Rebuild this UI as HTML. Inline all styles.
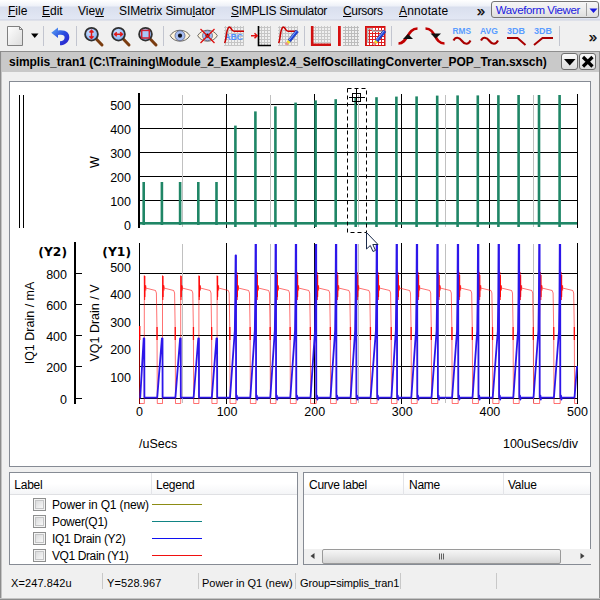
<!DOCTYPE html>
<html><head><meta charset="utf-8"><title>Waveform Viewer</title>
<style>
html,body{margin:0;padding:0;}
body{width:600px;height:600px;overflow:hidden;background:#f0f0f0;font-family:"Liberation Sans",sans-serif;font-size:12px;color:#000;position:relative;}
div{box-sizing:border-box;}
.abs,.pt,.mi,.st,.hd,.lg{position:absolute;white-space:nowrap;}
#menubar{position:absolute;left:0;top:0;width:600px;height:21px;background:linear-gradient(#ffffff 0px,#eef1f8 6px,#d9dfee 7px,#e2e7f4 19px,#c9cedc 20px,#f4f4f6 21px);}
.mi{top:3px;height:16px;line-height:16px;font-size:12px;color:#000;}
.mi u{text-decoration:underline;text-underline-offset:1px;}
#toolbar{position:absolute;left:0;top:21px;width:600px;height:30px;background:#f0f0f0;}
#tabbar{position:absolute;left:0;top:51px;width:600px;height:21px;background:#c9c9c9;border-top:1px solid #8e8e8e;border-left:2px solid #8c8c8c;border-right:1px solid #8e8e8e;}
#title{position:absolute;left:7px;top:3px;letter-spacing:-0.035px;font-weight:bold;font-size:12px;line-height:14px;white-space:nowrap;color:#000;}
.tbtn{position:absolute;top:1px;width:17px;height:17px;border:1px solid #6e6e6e;border-radius:3px;background:linear-gradient(#fafafa,#dcdcdc);}
#plot{position:absolute;left:9px;top:81px;width:582px;height:386px;background:#fff;border:1px solid #868b94;}
.pt{font-size:12.5px;line-height:14px;color:#000;}
.pt.b{font-weight:bold;font-family:"DejaVu Sans","Liberation Sans",sans-serif;font-size:12.3px;}
.pt.big{font-size:12.5px;}
.pt.rot{transform:translate(-50%,-50%) rotate(-90deg);transform-origin:center center;}
.panel{position:absolute;background:#fff;border:1px solid #868b94;}
.hd{top:1.5px;height:21px;line-height:21px;font-size:12px;letter-spacing:-0.25px;}
.hrow{position:absolute;left:0;top:0;right:0;height:22px;background:linear-gradient(#ffffff,#ffffff 50%,#f4f5f7);border-bottom:1px solid #dfe0e3;}
.vsep{position:absolute;top:0;width:1px;height:22px;background:#e3e4e8;}
.cb{position:absolute;left:23px;width:13px;height:13px;border:1px solid #8e8f8f;background:#f4f4f4;}
.cb i{position:absolute;left:1px;top:1px;width:9px;height:9px;border:1px solid #c4c5c6;background:linear-gradient(135deg,#dadbdc,#f8f8f8);display:block;box-sizing:border-box;}
.lg{left:42px;font-size:12px;line-height:14px;letter-spacing:-0.28px;margin-top:0.7px;}
.ll{position:absolute;left:142px;width:50px;height:1px;}
.st{top:576px;font-size:11px;line-height:14px;letter-spacing:-0.14px;}
.ss{position:absolute;top:573px;width:1px;height:16px;background:#c8c8c8;}
</style></head>
<body>
<!-- menu bar -->
<div id="menubar">
<div class="mi" style="left:8px"><u>F</u>ile</div>
<div class="mi" style="left:42px"><u>E</u>dit</div>
<div class="mi" style="left:78px">Vie<u>w</u></div>
<div class="mi" style="left:119px;letter-spacing:-0.1px">SIMetrix Simu<u>l</u>ator</div>
<div class="mi" style="left:231px;letter-spacing:-0.32px"><u>S</u>IMPLIS Simulator</div>
<div class="mi" style="left:343px;letter-spacing:-0.35px"><u>C</u>ursors</div>
<div class="mi" style="left:399px;letter-spacing:0.15px"><u>A</u>nnotate</div>
<div class="mi" style="left:477px;font-size:14.5px;top:2.5px;-webkit-text-stroke:0.35px #000">»</div>
<div class="abs" style="left:491px;top:1px;width:108px;height:17px;border:1px solid #747474;border-radius:3px;background:linear-gradient(#f6f6f6,#ececec 50%,#dedede);"></div>
<div class="mi" style="left:495.8px;top:2px;color:#1a1ae0;font-size:11.5px;letter-spacing:-0.4px">Waveform Viewer</div>
<div class="abs" style="left:586px;top:3px;width:1px;height:13px;background:#a0a0a0"></div>
<svg class="abs" style="left:588.5px;top:7.5px" width="9" height="6"><path d="M0.5 0.5 L8.5 0.5 L4.5 5 Z" fill="#1a1ae0"/></svg>
</div>
<!-- toolbar -->
<div id="toolbar">
<svg width="600" height="30" viewBox="0 21 600 30" style="position:absolute;left:0;top:0">
<defs>
<linearGradient id="gpage" x1="0" y1="0" x2="1" y2="1"><stop offset="0" stop-color="#ffffff"/><stop offset="1" stop-color="#dcdcdc"/></linearGradient>
<linearGradient id="gundo" x1="0" y1="0" x2="1" y2="1"><stop offset="0" stop-color="#5fa8f4"/><stop offset="0.5" stop-color="#2b4fe0"/><stop offset="1" stop-color="#2a18c8"/></linearGradient>
<radialGradient id="glens" cx="0.4" cy="0.35" r="0.8"><stop offset="0" stop-color="#cfe2ff"/><stop offset="1" stop-color="#6ea4f4"/></radialGradient>
<pattern id="grid" x="0" y="0" width="3" height="3" patternUnits="userSpaceOnUse"><path d="M0 0.5 H3 M0.5 0 V3" stroke="#9a9a9a" stroke-width="1" fill="none"/></pattern>
<pattern id="gridr" x="0" y="0" width="3" height="3" patternUnits="userSpaceOnUse"><path d="M0 0.5 H3 M0.5 0 V3" stroke="#e02020" stroke-width="1" fill="none"/></pattern>
<g id="mag">
<path d="M5 5 L10.5 10.8" stroke="#7a3c10" stroke-width="3" stroke-linecap="round"/>
<circle cx="0" cy="0" r="6.4" fill="url(#glens)" stroke="#303030" stroke-width="1.8"/>
</g>
<g id="eye">
<path d="M-9.8 0 C-6 -7.3 6 -7.3 9.8 0 C6 7.3 -6 7.3 -9.8 0 Z" fill="#fff4dc" stroke="#484848" stroke-width="0.8"/>
<circle cx="0" cy="0" r="5" fill="#a6bdf0" stroke="#50587a" stroke-width="0.7"/>
<circle cx="0" cy="0" r="2.1" fill="#101018"/>
</g>
<g id="pencil">
<path d="M0 0 L-8 10 L-5.6 11.9 L2.4 1.9 Z" fill="#2244d8" stroke="#1030a0" stroke-width="0.5"/>
<path d="M-8 10 L-5.6 11.9 L-7.2 13.9 L-9.6 12 Z" fill="#f0e020"/>
<path d="M-9.6 12 L-7.2 13.9 L-8.8 15.6 L-11.4 13.8 Z" fill="#e89090"/>
<path d="M0.6 0.6 L-7.2 10.4" stroke="#8ab4ff" stroke-width="0.9"/>
</g>
</defs>
<!-- new page -->
<path d="M7.5 26.5 H19.5 L22.5 29.5 V45.5 H7.5 Z" fill="url(#gpage)" stroke="#808080" stroke-width="1"/>
<path d="M19.5 26.5 V29.5 H22.5" fill="none" stroke="#808080" stroke-width="1"/>
<path d="M31 33.5 H38.5 L34.75 38 Z" fill="#000"/>
<!-- separators -->
<g fill="#c2c5cf"><rect x="43" y="26" width="1" height="20"/><rect x="76" y="26" width="1" height="20"/><rect x="163" y="26" width="1" height="20"/><rect x="304" y="26" width="1" height="20"/><rect x="391" y="26" width="1" height="20"/><rect x="559" y="26" width="1" height="20"/></g>
<!-- undo -->
<path d="M51.3 32.7 L58 27.5 L58 30.5 C66 29.5 69.5 33 69.3 37.5 C69 42 65 45.3 60 45.3 L60 41.3 C63 41.3 64.6 39.8 64.6 37.5 C64.6 35 62.5 34.2 58 35 L58 38 Z" fill="url(#gundo)"/>
<!-- magnifiers -->
<use href="#mag" x="91.5" y="34.2"/>
<path d="M91.5 31 V37.8 M89.5 32.6 L91.5 30.4 L93.5 32.6 M89.5 36.2 L91.5 38.4 L93.5 36.2" stroke="#e01818" stroke-width="1.5" fill="none"/>
<use href="#mag" x="118.5" y="34.2"/>
<path d="M115 34.2 H122 M116.8 32.2 L114.6 34.2 L116.8 36.2 M120.2 32.2 L122.4 34.2 L120.2 36.2" stroke="#e01818" stroke-width="1.5" fill="none"/>
<use href="#mag" x="145.5" y="34.2"/>
<rect x="141.7" y="30.4" width="7.6" height="7.6" fill="#a8c8f8" stroke="#d02030" stroke-width="1.5"/>
<!-- eyes -->
<use href="#eye" x="180" y="35.7"/>
<use href="#eye" x="207.5" y="35.7"/>
<path d="M200.5 29 L214.5 43 M214.5 29 L200.5 43" stroke="#e01010" stroke-width="1.3"/>
<!-- graph ABC -->
<rect x="224" y="26" width="20" height="20" fill="url(#grid)" opacity="0.5"/>
<text x="224.5" y="40" font-family="Liberation Sans, sans-serif" font-weight="bold" font-size="9.6" fill="#5090ff" textLength="18.5" lengthAdjust="spacingAndGlyphs">ABC</text>
<path d="M224.5 43 C226.5 41 226 28 229 27.2 C231.5 26.6 231 31.3 234 31.3 H244" fill="none" stroke="#c80000" stroke-width="1.6"/>
<!-- arrow + grid -->
<rect x="259" y="26" width="12" height="19" fill="url(#grid)" opacity="0.5"/>
<path d="M258.5 26 V45.5 H271" fill="none" stroke="#000" stroke-width="1.6"/>
<path d="M251 35.7 H257 M254.5 33.2 L257.2 35.7 L254.5 38.2" stroke="#e01010" stroke-width="1.5" fill="none"/>
<!-- graph + pencil -->
<rect x="278" y="26" width="20" height="20" fill="url(#grid)" opacity="0.5"/>
<path d="M278.5 43 C280.5 41 280 28 283 27.2 C285.5 26.6 285 31.3 288 31.3 H297" fill="none" stroke="#c80000" stroke-width="1.6"/>
<use href="#pencil" x="296" y="30"/>
<!-- red L grid -->
<rect x="313" y="26" width="18" height="18" fill="url(#grid)" opacity="0.45"/>
<path d="M312.2 26 V44.8 H331" fill="none" stroke="#d01010" stroke-width="2.6"/>
<!-- red bar grid -->
<rect x="343" y="26" width="16" height="20" fill="url(#grid)" opacity="0.6"/>
<rect x="338" y="26" width="2.8" height="20" fill="#d81010"/>
<!-- red grid pencil -->
<rect x="365" y="26" width="20" height="20" fill="#fff"/>
<rect x="365" y="26" width="20" height="20" fill="url(#gridr)"/>
<rect x="365.5" y="26.5" width="19.5" height="19" fill="none" stroke="#d01010" stroke-width="1"/>
<path d="M367.7 43 V28.7 H372 L373 31.2 H383" fill="none" stroke="#b4b4b4" stroke-width="1.5"/>
<use href="#pencil" x="383.5" y="30"/>
<!-- rising curve -->
<path d="M398.5 43.5 C408 43.5 407 28.5 417.5 28.5" fill="none" stroke="#c00000" stroke-width="2.6"/>
<path d="M403 39 L413 39 L408 34 Z" fill="#101010"/>
<!-- falling curve -->
<path d="M425.5 28.5 C436 28.5 434 43.5 444.5 43.5" fill="none" stroke="#c00000" stroke-width="2.6"/>
<path d="M430.5 33.5 L441 33.5 L435.7 38.5 Z" fill="#101010"/>
<!-- RMS AVG 3DB -->
<g font-family="Liberation Sans, sans-serif" font-weight="bold" font-size="8.8" fill="#5a9cff">
<text x="452.5" y="33.8" textLength="18.5" lengthAdjust="spacingAndGlyphs">RMS</text>
<text x="480" y="33.8" textLength="18" lengthAdjust="spacingAndGlyphs">AVG</text>
<text x="507" y="33.8" textLength="18" lengthAdjust="spacingAndGlyphs">3DB</text>
<text x="534" y="33.8" textLength="18" lengthAdjust="spacingAndGlyphs">3DB</text>
</g>
<path d="M453.5 40.5 C455.5 36.5 459 37 462 41 C465 45 468.5 44.5 470.5 40.5" fill="none" stroke="#a80000" stroke-width="2.1"/>
<path d="M481 40.5 C483 36.5 486.5 37 489.5 41 C492.5 45 496 44.5 498 40.5" fill="none" stroke="#a80000" stroke-width="2.1"/>
<path d="M507 38 H517.5 L525.5 45" fill="none" stroke="#a80000" stroke-width="2"/>
<path d="M534 45 L542.5 38 H553" fill="none" stroke="#a80000" stroke-width="2"/>

</svg>
<div class="abs" style="left:589px;top:8.5px;font-size:14.5px;line-height:14px;-webkit-text-stroke:0.35px #000">»</div>
</div>
<!-- tab bar -->
<div id="tabbar">
<div id="title">simplis_tran1 (C:\Training\Module_2_Examples\2.4_SelfOscillatingConverter_POP_Tran.sxsch)</div>
<div class="tbtn" style="left:559px"><svg width="15" height="15" style="position:absolute;left:0;top:0"><path d="M2 5 L13.5 5 L7.75 11.5 Z" fill="#000"/></svg></div>
<div class="tbtn" style="left:577px"><svg width="15" height="15" style="position:absolute;left:0;top:0"><path d="M3 3 L12.5 12.5 M12.5 3 L3 12.5" stroke="#000" stroke-width="3.2" fill="none"/></svg></div>
</div>
<!-- plot panel -->
<div id="plot"></div>
<svg width="600" height="600" viewBox="0 0 600 600" style="position:absolute;left:0;top:0" shape-rendering="auto">
<rect x="139" y="104" width="439" height="1" fill="#000"/>
<rect x="139" y="128" width="439" height="1" fill="#000"/>
<rect x="139" y="152" width="439" height="1" fill="#000"/>
<rect x="139" y="176" width="439" height="1" fill="#000"/>
<rect x="139" y="200" width="439" height="1" fill="#000"/>
<rect x="226" y="94" width="1" height="134" fill="#000"/>
<rect x="314" y="94" width="1" height="134" fill="#000"/>
<rect x="401" y="94" width="1" height="134" fill="#000"/>
<rect x="489" y="94" width="1" height="134" fill="#000"/>
<rect x="577" y="94" width="1" height="134" fill="#000"/>
<rect x="182" y="95" width="1" height="132" fill="#c0c0c0"/>
<rect x="270" y="95" width="1" height="132" fill="#c0c0c0"/>
<rect x="358" y="95" width="1" height="132" fill="#c0c0c0"/>
<rect x="445" y="95" width="1" height="132" fill="#c0c0c0"/>
<rect x="533" y="95" width="1" height="132" fill="#c0c0c0"/>
<rect x="138" y="93" width="2" height="135" fill="#000"/>
<rect x="140" y="222" width="437" height="2.6" fill="#1f8666"/>
<rect x="142.4" y="182" width="2.6" height="43.0" fill="#1f8666"/>
<rect x="160.6" y="182" width="2.6" height="43.0" fill="#1f8666"/>
<rect x="178.8" y="182" width="2.6" height="43.0" fill="#1f8666"/>
<rect x="197.0" y="182" width="2.6" height="43.0" fill="#1f8666"/>
<rect x="215.2" y="182" width="2.6" height="43.0" fill="#1f8666"/>
<rect x="234.1" y="125.6" width="2.6" height="101.4" fill="#1f8666"/>
<rect x="254.1" y="111.4" width="2.6" height="115.6" fill="#1f8666"/>
<rect x="274.1" y="106.4" width="2.6" height="120.6" fill="#1f8666"/>
<rect x="294.3" y="102.6" width="2.6" height="124.4" fill="#1f8666"/>
<rect x="314.3" y="100.4" width="2.6" height="126.6" fill="#1f8666"/>
<rect x="334.4" y="99.2" width="2.6" height="127.8" fill="#1f8666"/>
<rect x="354.4" y="98" width="2.6" height="129.0" fill="#1f8666"/>
<rect x="375.2" y="97.2" width="2.6" height="129.8" fill="#1f8666"/>
<rect x="395.1" y="96.6" width="2.6" height="130.4" fill="#1f8666"/>
<rect x="415.3" y="96.4" width="2.6" height="130.6" fill="#1f8666"/>
<rect x="435.9" y="95.6" width="2.6" height="131.4" fill="#1f8666"/>
<rect x="456.3" y="95.4" width="2.6" height="131.6" fill="#1f8666"/>
<rect x="476.5" y="95.4" width="2.6" height="131.6" fill="#1f8666"/>
<rect x="497.1" y="95.2" width="2.6" height="131.8" fill="#1f8666"/>
<rect x="517.3" y="95" width="2.6" height="132.0" fill="#1f8666"/>
<rect x="537.7" y="95" width="2.6" height="132.0" fill="#1f8666"/>
<rect x="558.3" y="95" width="2.6" height="132.0" fill="#1f8666"/>
<rect x="139" y="273" width="439" height="1" fill="#000"/>
<rect x="139" y="304" width="439" height="1" fill="#000"/>
<rect x="139" y="335" width="439" height="1" fill="#000"/>
<rect x="139" y="366" width="439" height="1" fill="#000"/>
<rect x="139" y="398" width="439" height="1" fill="#000"/>
<rect x="226" y="243" width="1" height="161" fill="#000"/>
<rect x="314" y="243" width="1" height="161" fill="#000"/>
<rect x="401" y="243" width="1" height="161" fill="#000"/>
<rect x="489" y="243" width="1" height="161" fill="#000"/>
<rect x="577" y="243" width="1" height="161" fill="#000"/>
<rect x="182" y="244" width="1" height="159" fill="#c0c0c0"/>
<rect x="270" y="244" width="1" height="159" fill="#c0c0c0"/>
<rect x="358" y="244" width="1" height="159" fill="#c0c0c0"/>
<rect x="445" y="244" width="1" height="159" fill="#c0c0c0"/>
<rect x="533" y="244" width="1" height="159" fill="#c0c0c0"/>
<rect x="139" y="243" width="1" height="161" fill="#000"/>
<rect x="74" y="242" width="2" height="162" fill="#000"/>
<rect x="76" y="273" width="6" height="1" fill="#000"/>
<rect x="76" y="304" width="6" height="1" fill="#000"/>
<rect x="76" y="335" width="6" height="1" fill="#000"/>
<rect x="76" y="366" width="6" height="1" fill="#000"/>
<rect x="76" y="398" width="6" height="1" fill="#000"/>
<path d="M139.5 326 L139.5 403.5 L143.4 403.5 L144.3 403.5 L144.3 320 L144.3 275.5 L144.6 300 L145.1 285 L145.6 288 L155.5 290.5 L156.4 293 L157.0 330 L157.3 403.5 L162.5 403.5 L162.5 320 L162.5 275.5 L162.8 300 L163.3 285 L163.8 288 L173.7 290.5 L174.6 293 L175.2 330 L175.5 403.5 L180.7 403.5 L180.7 320 L180.7 275.5 L181.0 300 L181.5 285 L182.0 288 L191.9 290.5 L192.8 293 L193.4 330 L193.7 403.5 L198.9 403.5 L198.9 320 L198.9 275.5 L199.2 300 L199.7 285 L200.2 288 L210.1 290.5 L211.0 293 L211.6 330 L211.9 403.5 L217.1 403.5 L217.1 320 L217.1 275.5 L217.4 300 L217.9 285 L218.4 288 L228.3 290.5 L229.2 293 L229.8 330 L230.1 403.5 L236.0 403.5 L236.0 320 L236.9 272 L237.2 300 L237.7 285 L238.2 288 L248.6 290.5 L249.5 293 L250.1 330 L250.4 403.5 L256.0 403.5 L256.0 320 L256.9 272 L257.2 300 L257.7 285 L258.2 288 L268.6 290.5 L269.5 293 L270.1 330 L270.4 403.5 L276.0 403.5 L276.0 320 L276.9 272 L277.2 300 L277.7 285 L278.2 288 L288.6 290.5 L289.5 293 L290.1 330 L290.4 403.5 L296.2 403.5 L296.2 320 L297.1 272 L297.4 300 L297.9 285 L298.4 288 L308.8 290.5 L309.7 293 L310.3 330 L310.6 403.5 L316.2 403.5 L316.2 320 L317.1 272 L317.4 300 L317.9 285 L318.4 288 L328.8 290.5 L329.7 293 L330.3 330 L330.6 403.5 L336.3 403.5 L336.3 320 L337.2 272 L337.5 300 L338.0 285 L338.5 288 L348.9 290.5 L349.8 293 L350.4 330 L350.7 403.5 L356.3 403.5 L356.3 320 L357.2 272 L357.5 300 L358.0 285 L358.5 288 L368.9 290.5 L369.8 293 L370.4 330 L370.7 403.5 L377.1 403.5 L377.1 320 L378.0 272 L378.3 300 L378.8 285 L379.3 288 L389.7 290.5 L390.6 293 L391.2 330 L391.5 403.5 L397.0 403.5 L397.0 320 L397.9 272 L398.2 300 L398.7 285 L399.2 288 L409.6 290.5 L410.5 293 L411.1 330 L411.4 403.5 L417.2 403.5 L417.2 320 L418.1 272 L418.4 300 L418.9 285 L419.4 288 L429.8 290.5 L430.7 293 L431.3 330 L431.6 403.5 L437.8 403.5 L437.8 320 L438.7 272 L439.0 300 L439.5 285 L440.0 288 L450.4 290.5 L451.3 293 L451.9 330 L452.2 403.5 L458.2 403.5 L458.2 320 L459.1 272 L459.4 300 L459.9 285 L460.4 288 L470.8 290.5 L471.7 293 L472.3 330 L472.6 403.5 L478.4 403.5 L478.4 320 L479.3 272 L479.6 300 L480.1 285 L480.6 288 L491.0 290.5 L491.9 293 L492.5 330 L492.8 403.5 L499.0 403.5 L499.0 320 L499.9 272 L500.2 300 L500.7 285 L501.2 288 L511.6 290.5 L512.5 293 L513.1 330 L513.4 403.5 L519.2 403.5 L519.2 320 L520.1 272 L520.4 300 L520.9 285 L521.4 288 L531.8 290.5 L532.7 293 L533.3 330 L533.6 403.5 L539.6 403.5 L539.6 320 L540.5 272 L540.8 300 L541.3 285 L541.8 288 L552.2 290.5 L553.1 293 L553.7 330 L554.0 403.5 L560.2 403.5 L560.2 320 L561.1 272 L561.4 300 L561.9 285 L562.4 288 L572.8 290.5 L573.7 293 L574.3 330 L574.6 403.5 L577 403.5" fill="none" stroke="#ff0000" stroke-width="0.8" stroke-opacity="0.7" stroke-linejoin="round"/>
<rect x="156.4" y="327" width="1.3" height="13" fill="#ff0000" fill-opacity="0.9"/>
<rect x="144.2" y="276" width="1.2" height="21" fill="#ff0000" fill-opacity="0.9"/>
<rect x="145.3" y="285.5" width="1" height="5" fill="#ff0000" fill-opacity="0.8"/>
<rect x="174.6" y="327" width="1.3" height="13" fill="#ff0000" fill-opacity="0.9"/>
<rect x="162.4" y="276" width="1.2" height="21" fill="#ff0000" fill-opacity="0.9"/>
<rect x="163.5" y="285.5" width="1" height="5" fill="#ff0000" fill-opacity="0.8"/>
<rect x="192.8" y="327" width="1.3" height="13" fill="#ff0000" fill-opacity="0.9"/>
<rect x="180.6" y="276" width="1.2" height="21" fill="#ff0000" fill-opacity="0.9"/>
<rect x="181.7" y="285.5" width="1" height="5" fill="#ff0000" fill-opacity="0.8"/>
<rect x="211.0" y="327" width="1.3" height="13" fill="#ff0000" fill-opacity="0.9"/>
<rect x="198.8" y="276" width="1.2" height="21" fill="#ff0000" fill-opacity="0.9"/>
<rect x="199.9" y="285.5" width="1" height="5" fill="#ff0000" fill-opacity="0.8"/>
<rect x="229.2" y="327" width="1.3" height="13" fill="#ff0000" fill-opacity="0.9"/>
<rect x="217.0" y="276" width="1.2" height="21" fill="#ff0000" fill-opacity="0.9"/>
<rect x="218.1" y="285.5" width="1" height="5" fill="#ff0000" fill-opacity="0.8"/>
<rect x="249.5" y="327" width="1.3" height="13" fill="#ff0000" fill-opacity="0.9"/>
<rect x="236.8" y="275" width="1.2" height="22" fill="#ff0000" fill-opacity="0.9"/>
<rect x="237.9" y="285.5" width="1" height="5" fill="#ff0000" fill-opacity="0.8"/>
<rect x="269.5" y="327" width="1.3" height="13" fill="#ff0000" fill-opacity="0.9"/>
<rect x="256.8" y="275" width="1.2" height="22" fill="#ff0000" fill-opacity="0.9"/>
<rect x="257.9" y="285.5" width="1" height="5" fill="#ff0000" fill-opacity="0.8"/>
<rect x="289.5" y="327" width="1.3" height="13" fill="#ff0000" fill-opacity="0.9"/>
<rect x="276.8" y="275" width="1.2" height="22" fill="#ff0000" fill-opacity="0.9"/>
<rect x="277.9" y="285.5" width="1" height="5" fill="#ff0000" fill-opacity="0.8"/>
<rect x="309.7" y="327" width="1.3" height="13" fill="#ff0000" fill-opacity="0.9"/>
<rect x="297.0" y="275" width="1.2" height="22" fill="#ff0000" fill-opacity="0.9"/>
<rect x="298.1" y="285.5" width="1" height="5" fill="#ff0000" fill-opacity="0.8"/>
<rect x="329.7" y="327" width="1.3" height="13" fill="#ff0000" fill-opacity="0.9"/>
<rect x="317.0" y="275" width="1.2" height="22" fill="#ff0000" fill-opacity="0.9"/>
<rect x="318.1" y="285.5" width="1" height="5" fill="#ff0000" fill-opacity="0.8"/>
<rect x="349.8" y="327" width="1.3" height="13" fill="#ff0000" fill-opacity="0.9"/>
<rect x="337.1" y="275" width="1.2" height="22" fill="#ff0000" fill-opacity="0.9"/>
<rect x="338.2" y="285.5" width="1" height="5" fill="#ff0000" fill-opacity="0.8"/>
<rect x="369.8" y="327" width="1.3" height="13" fill="#ff0000" fill-opacity="0.9"/>
<rect x="357.1" y="275" width="1.2" height="22" fill="#ff0000" fill-opacity="0.9"/>
<rect x="358.2" y="285.5" width="1" height="5" fill="#ff0000" fill-opacity="0.8"/>
<rect x="390.6" y="327" width="1.3" height="13" fill="#ff0000" fill-opacity="0.9"/>
<rect x="377.9" y="275" width="1.2" height="22" fill="#ff0000" fill-opacity="0.9"/>
<rect x="379.0" y="285.5" width="1" height="5" fill="#ff0000" fill-opacity="0.8"/>
<rect x="410.5" y="327" width="1.3" height="13" fill="#ff0000" fill-opacity="0.9"/>
<rect x="397.8" y="275" width="1.2" height="22" fill="#ff0000" fill-opacity="0.9"/>
<rect x="398.9" y="285.5" width="1" height="5" fill="#ff0000" fill-opacity="0.8"/>
<rect x="430.7" y="327" width="1.3" height="13" fill="#ff0000" fill-opacity="0.9"/>
<rect x="418.0" y="275" width="1.2" height="22" fill="#ff0000" fill-opacity="0.9"/>
<rect x="419.1" y="285.5" width="1" height="5" fill="#ff0000" fill-opacity="0.8"/>
<rect x="451.3" y="327" width="1.3" height="13" fill="#ff0000" fill-opacity="0.9"/>
<rect x="438.6" y="275" width="1.2" height="22" fill="#ff0000" fill-opacity="0.9"/>
<rect x="439.7" y="285.5" width="1" height="5" fill="#ff0000" fill-opacity="0.8"/>
<rect x="471.7" y="327" width="1.3" height="13" fill="#ff0000" fill-opacity="0.9"/>
<rect x="459.0" y="275" width="1.2" height="22" fill="#ff0000" fill-opacity="0.9"/>
<rect x="460.1" y="285.5" width="1" height="5" fill="#ff0000" fill-opacity="0.8"/>
<rect x="491.9" y="327" width="1.3" height="13" fill="#ff0000" fill-opacity="0.9"/>
<rect x="479.2" y="275" width="1.2" height="22" fill="#ff0000" fill-opacity="0.9"/>
<rect x="480.3" y="285.5" width="1" height="5" fill="#ff0000" fill-opacity="0.8"/>
<rect x="512.5" y="327" width="1.3" height="13" fill="#ff0000" fill-opacity="0.9"/>
<rect x="499.8" y="275" width="1.2" height="22" fill="#ff0000" fill-opacity="0.9"/>
<rect x="500.9" y="285.5" width="1" height="5" fill="#ff0000" fill-opacity="0.8"/>
<rect x="532.7" y="327" width="1.3" height="13" fill="#ff0000" fill-opacity="0.9"/>
<rect x="520.0" y="275" width="1.2" height="22" fill="#ff0000" fill-opacity="0.9"/>
<rect x="521.1" y="285.5" width="1" height="5" fill="#ff0000" fill-opacity="0.8"/>
<rect x="553.1" y="327" width="1.3" height="13" fill="#ff0000" fill-opacity="0.9"/>
<rect x="540.4" y="275" width="1.2" height="22" fill="#ff0000" fill-opacity="0.9"/>
<rect x="541.5" y="285.5" width="1" height="5" fill="#ff0000" fill-opacity="0.8"/>
<rect x="573.7" y="327" width="1.3" height="13" fill="#ff0000" fill-opacity="0.9"/>
<rect x="561.0" y="275" width="1.2" height="22" fill="#ff0000" fill-opacity="0.9"/>
<rect x="562.1" y="285.5" width="1" height="5" fill="#ff0000" fill-opacity="0.8"/>
<rect x="139" y="326" width="1.4" height="14" fill="#ff0000"/>
<clipPath id="cb"><rect x="139" y="244" width="439" height="165"/></clipPath>
<path d="M139.6 397.6 L140.2 397.6 L143.7 338.3 L144.3 338.3 L144.4 397.6 L157.2 397.6 L161.9 338.3 L162.5 338.3 L162.6 397.6 L175.4 397.6 L180.1 338.3 L180.7 338.3 L180.8 397.6 L193.6 397.6 L198.3 338.3 L198.9 338.3 L199.0 397.6 L211.8 397.6 L216.5 338.3 L217.1 338.3 L217.2 397.6 L230.0 397.6 L234.8 331 L235.3 295 L235.6 255.5 L236.0 255.5 L236.1 397.6 L236.8 395.6 L237.2 399.6 L237.5 397.6 L250.3 397.6 L254.8 331 L255.3 295 L255.6 236 L256.0 236 L256.1 397.6 L256.8 395.6 L257.2 399.6 L257.5 397.6 L270.3 397.6 L274.8 331 L275.3 295 L275.6 236 L276.0 236 L276.1 397.6 L276.8 395.6 L277.2 399.6 L277.5 397.6 L290.3 397.6 L295.0 331 L295.5 295 L295.8 236 L296.2 236 L296.3 397.6 L297.0 395.6 L297.4 399.6 L297.7 397.6 L310.5 397.6 L315.0 331 L315.5 295 L315.8 236 L316.2 236 L316.3 397.6 L317.0 395.6 L317.4 399.6 L317.7 397.6 L330.5 397.6 L335.1 331 L335.6 295 L335.9 236 L336.3 236 L336.4 397.6 L337.1 395.6 L337.5 399.6 L337.8 397.6 L350.6 397.6 L355.1 331 L355.6 295 L355.9 236 L356.3 236 L356.4 397.6 L357.1 395.6 L357.5 399.6 L357.8 397.6 L370.6 397.6 L375.9 331 L376.4 295 L376.7 236 L377.1 236 L377.2 397.6 L377.9 395.6 L378.3 399.6 L378.6 397.6 L391.4 397.6 L395.8 331 L396.3 295 L396.6 236 L397.0 236 L397.1 397.6 L397.8 395.6 L398.2 399.6 L398.5 397.6 L411.3 397.6 L416.0 331 L416.5 295 L416.8 236 L417.2 236 L417.3 397.6 L418.0 395.6 L418.4 399.6 L418.7 397.6 L431.5 397.6 L436.6 331 L437.1 295 L437.4 236 L437.8 236 L437.9 397.6 L438.6 395.6 L439.0 399.6 L439.3 397.6 L452.1 397.6 L457.0 331 L457.5 295 L457.8 236 L458.2 236 L458.3 397.6 L459.0 395.6 L459.4 399.6 L459.7 397.6 L472.5 397.6 L477.2 331 L477.7 295 L478.0 236 L478.4 236 L478.5 397.6 L479.2 395.6 L479.6 399.6 L479.9 397.6 L492.7 397.6 L497.8 331 L498.3 295 L498.6 236 L499.0 236 L499.1 397.6 L499.8 395.6 L500.2 399.6 L500.5 397.6 L513.3 397.6 L518.0 331 L518.5 295 L518.8 236 L519.2 236 L519.3 397.6 L520.0 395.6 L520.4 399.6 L520.7 397.6 L533.5 397.6 L538.4 331 L538.9 295 L539.2 236 L539.6 236 L539.7 397.6 L540.4 395.6 L540.8 399.6 L541.1 397.6 L553.9 397.6 L559.0 331 L559.5 295 L559.8 236 L560.2 236 L560.3 397.6 L561.0 395.6 L561.4 399.6 L561.7 397.6 L574.5 397.6 L577 366" fill="none" stroke="#2c16ea" stroke-width="1.8" stroke-linejoin="round" clip-path="url(#cb)"/>
<rect x="347.5" y="88.5" width="19" height="144" fill="none" stroke="#000" stroke-width="1" stroke-dasharray="4 3"/>
<rect x="352.5" y="93.5" width="8" height="8" fill="none" stroke="#000" stroke-width="1"/>
<rect x="349" y="97" width="16" height="1" fill="#000"/>
<rect x="356" y="89" width="1" height="16" fill="#000"/>
<path d="M366.5 232.5 L366.5 249 L370.3 245.5 L373 251.5 L375.5 250.4 L372.8 244.5 L378 244.5 Z" fill="#fff" stroke="#1a2a4a" stroke-width="1" stroke-linejoin="miter"/>
<rect x="19" y="95" width="1" height="133" fill="#000"/>
<rect x="23" y="95" width="1" height="133" fill="#000"/>
</svg>
<div class="pt" style="right:469px;top:98.5px;">500</div>
<div class="pt" style="right:469px;top:122.5px;">400</div>
<div class="pt" style="right:469px;top:146.5px;">300</div>
<div class="pt" style="right:469px;top:170.5px;">200</div>
<div class="pt" style="right:469px;top:194.5px;">100</div>
<div class="pt" style="right:469px;top:218.5px;">0</div>
<div class="pt" style="right:533px;top:268px;">800</div>
<div class="pt" style="right:533px;top:299px;">600</div>
<div class="pt" style="right:533px;top:330px;">400</div>
<div class="pt" style="right:533px;top:361px;">200</div>
<div class="pt" style="right:533px;top:393px;">0</div>
<div class="pt" style="right:469px;top:260.7px;">500</div>
<div class="pt" style="right:469px;top:288.2px;">400</div>
<div class="pt" style="right:469px;top:315.7px;">300</div>
<div class="pt" style="right:469px;top:343.2px;">200</div>
<div class="pt" style="right:469px;top:370.7px;">100</div>
<div class="pt b" style="right:533px;top:245px;">(Y2)</div>
<div class="pt b" style="right:469px;top:245px;">(Y1)</div>
<div class="pt" style="left:89.5px;width:100px;text-align:center;top:405px;">0</div>
<div class="pt" style="left:177.1px;width:100px;text-align:center;top:405px;">100</div>
<div class="pt" style="left:264.7px;width:100px;text-align:center;top:405px;">200</div>
<div class="pt" style="left:352.3px;width:100px;text-align:center;top:405px;">300</div>
<div class="pt" style="left:439.9px;width:100px;text-align:center;top:405px;">400</div>
<div class="pt" style="left:527.5px;width:100px;text-align:center;top:405px;">500</div>
<div class="pt big" style="left:139px;top:437px;">/uSecs</div>
<div class="pt big" style="right:22px;top:437px;">100uSecs/div</div>
<div class="pt rot" style="left:30px;top:323px;">IQ1 Drain / mA</div>
<div class="pt rot" style="left:95px;top:323px;">VQ1 Drain / V</div>
<div class="pt rot" style="left:95.3px;top:161.5px;">W</div>
<!-- legend panel -->
<div class="panel" style="left:9px;top:472px;width:289px;height:93px;">
<div class="hrow"></div>
<div class="vsep" style="left:141px"></div>
<div class="hd" style="left:4.3px">Label</div>
<div class="hd" style="left:146px">Legend</div>
<div class="cb" style="top:25px"><i></i></div><div class="lg" style="top:24px;letter-spacing:-0.15px">Power in Q1 (new)</div><div class="ll" style="top:31px;background:#8c8c14"></div>
<div class="cb" style="top:42px"><i></i></div><div class="lg" style="top:41px">Power(Q1)</div><div class="ll" style="top:48px;background:#118484"></div>
<div class="cb" style="top:59px"><i></i></div><div class="lg" style="top:58px">IQ1 Drain (Y2)</div><div class="ll" style="top:65px;background:#1010f0"></div>
<div class="cb" style="top:76px"><i></i></div><div class="lg" style="top:75px;letter-spacing:-0.4px">VQ1 Drain (Y1)</div><div class="ll" style="top:82px;background:#f01010"></div>
</div>
<!-- curve panel -->
<div class="panel" style="left:303px;top:472px;width:288px;height:93px;">
<div class="hrow"></div>
<div class="vsep" style="left:99px"></div>
<div class="vsep" style="left:199px"></div>
<div class="hd" style="left:5px">Curve label</div>
<div class="hd" style="left:105px">Name</div>
<div class="hd" style="left:204px">Value</div>
<div class="abs" style="left:0;top:76px;width:287px;height:15px;background:#f0f0f0"></div>
<div class="abs" style="left:18px;top:76px;width:239px;height:15px;border:1px solid #9a9a9a;border-radius:2px;background:linear-gradient(#f6f6f6,#e6e6e6 50%,#d4d4d4)"></div>
<svg class="abs" style="left:0;top:76px" width="287" height="15"><path d="M10.5 4 L10.5 10 L6.5 7 Z M276.5 4 L276.5 10 L280.5 7 Z" fill="#404040"/><path d="M135.5 4.5 V10.5 M137.5 4.5 V10.5 M139.5 4.5 V10.5" stroke="#606060" stroke-width="1"/></svg>
</div>
<!-- status bar -->
<div class="st" style="left:11px;letter-spacing:0.1px">X=247.842u</div>
<div class="ss" style="left:102px"></div>
<div class="st" style="left:107px;letter-spacing:0.1px">Y=528.967</div>
<div class="ss" style="left:198px"></div>
<div class="st" style="left:202px;letter-spacing:-0.03px">Power in Q1 (new)</div>
<div class="ss" style="left:295px"></div>
<div class="st" style="left:300px">Group=simplis_tran1</div>
<div class="ss" style="left:400px"></div>
<div class="ss" style="left:496px"></div>
<!-- window borders -->
<div class="abs" style="left:0;top:51px;width:1px;height:549px;background:#8c8c8c"></div><div class="abs" style="left:1px;top:52px;width:1px;height:547px;background:#c4c4c4"></div>
<div class="abs" style="left:599px;top:51px;width:1px;height:549px;background:#8e8e8e"></div>
<div class="abs" style="left:0;top:598px;width:600px;height:1px;background:#c4c4c4"></div><div class="abs" style="left:0;top:599px;width:600px;height:1px;background:#8c8c8c"></div>
</body></html>
